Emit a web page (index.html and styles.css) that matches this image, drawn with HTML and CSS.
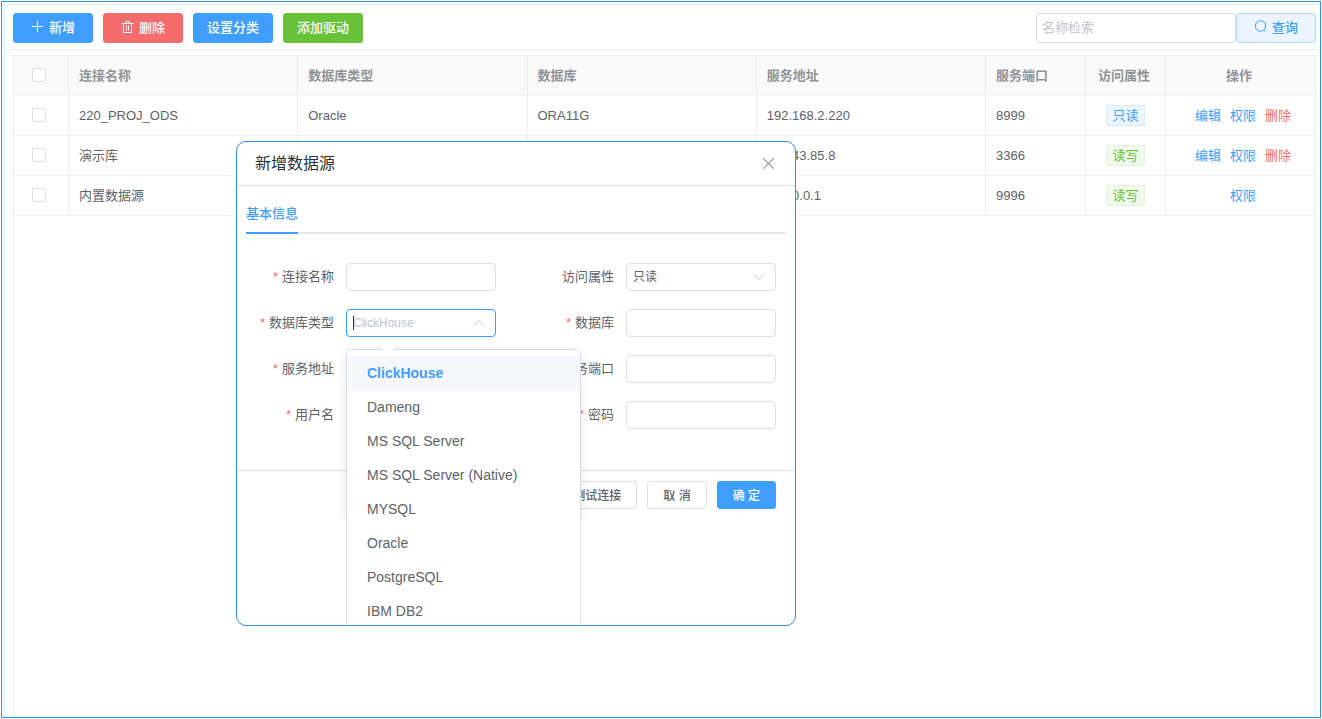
FILE: index.html
```html
<!DOCTYPE html>
<html lang="zh-CN">
<head>
    <meta charset="UTF-8">
    <meta name="viewport" content="width=device-width, initial-scale=1.0">
    <title>数据源管理</title>
    <link rel="stylesheet" href="styles.css">
</head>
<body>
    <div class="page">
        <main class="panel">
            <div class="toolbar">
                <button type="button" class="btn primary">
                    <svg class="icon" viewBox="0 0 13 13"><path d="M6.5 1v11M1 6.5h11"/></svg>新增
                </button>
                <button type="button" class="btn danger">
                    <svg class="icon" viewBox="0 0 13 13"><path d="M.5 3.5h12M4.5 3.5v-2h4v2M2.5 3.5v9h8v-9M5.5 5.5v5M7.5 5.5v5"/></svg>删除
                </button>
                <button type="button" class="btn primary">设置分类</button>
                <button type="button" class="btn success">添加驱动</button>
                <form class="search">
                    <input type="text" class="search-input" placeholder="名称检索" aria-label="名称检索">
                    <button type="button" class="btn plain">
                        <svg class="icon" viewBox="0 0 13 13"><circle cx="6.5" cy="6" r="5.2"/><path d="M10 9.8l1.8 1.8"/></svg>查询
                    </button>
                </form>
            </div>

            <div class="table-wrap">
                <table class="table">
                    <thead>
                        <tr>
                            <th class="col-check"><input type="checkbox" class="check" aria-label="全选"></th>
                            <th>连接名称</th>
                            <th>数据库类型</th>
                            <th>数据库</th>
                            <th>服务地址</th>
                            <th class="col-port">服务端口</th>
                            <th class="col-access">访问属性</th>
                            <th class="col-action">操作</th>
                        </tr>
                    </thead>
                    <tbody>
                        <tr>
                            <td class="col-check"><input type="checkbox" class="check" aria-label="220_PROJ_ODS"></td>
                            <td>220_PROJ_ODS</td>
                            <td>Oracle</td>
                            <td>ORA11G</td>
                            <td>192.168.2.220</td>
                            <td>8999</td>
                            <td class="col-access"><span class="tag">只读</span></td>
                            <td class="col-action"><div class="actions"><a href="#">编辑</a><a href="#">权限</a><a href="#" class="remove">删除</a></div></td>
                        </tr>
                        <tr>
                            <td class="col-check"><input type="checkbox" class="check" aria-label="演示库"></td>
                            <td>演示库</td>
                            <td></td>
                            <td></td>
                            <td>192.43.85.8</td>
                            <td>3366</td>
                            <td class="col-access"><span class="tag tag-write">读写</span></td>
                            <td class="col-action"><div class="actions"><a href="#">编辑</a><a href="#">权限</a><a href="#" class="remove">删除</a></div></td>
                        </tr>
                        <tr>
                            <td class="col-check"><input type="checkbox" class="check" aria-label="内置数据源"></td>
                            <td>内置数据源</td>
                            <td></td>
                            <td></td>
                            <td>127.0.0.1</td>
                            <td>9996</td>
                            <td class="col-access"><span class="tag tag-write">读写</span></td>
                            <td class="col-action"><div class="actions"><a href="#">权限</a></div></td>
                        </tr>
                    </tbody>
                </table>
            </div>
        </main>

        <div class="dialog" role="dialog" aria-labelledby="dialogTitle">
            <div class="dialog-header">
                <h2 id="dialogTitle">新增数据源</h2>
                <button type="button" class="close" aria-label="关闭">
                    <svg viewBox="0 0 12 12"><path d="M1 1l10 10M11 1L1 11"/></svg>
                </button>
            </div>
            <div class="dialog-body">
                <div class="tabs">
                    <button type="button" class="tab">基本信息</button>
                </div>
                <form class="form">
                    <div class="field">
                        <label class="required" for="name">连接名称</label>
                        <input type="text" id="name" class="control">
                    </div>
                    <div class="field">
                        <label for="access">访问属性</label>
                        <div class="select">
                            <select id="access" class="control">
                                <option>只读</option>
                                <option>读写</option>
                            </select>
                            <svg class="arrow" viewBox="0 0 12 12"><path d="M1 3.5l5 5 5-5"/></svg>
                        </div>
                    </div>
                    <div class="field">
                        <label class="required" for="dbType">数据库类型</label>
                        <div class="select open">
                            <input type="text" id="dbType" class="control" role="combobox" aria-expanded="true" aria-controls="dbTypeList" placeholder="ClickHouse">
                            <span class="caret"></span>
                            <svg class="arrow" viewBox="0 0 12 12"><path d="M1 8.5l5-5 5 5"/></svg>
                            <div class="dropdown">
                                <ul id="dbTypeList" role="listbox">
                                    <li role="option" class="selected" aria-selected="true">ClickHouse</li>
                                    <li role="option">Dameng</li>
                                    <li role="option">MS SQL Server</li>
                                    <li role="option">MS SQL Server (Native)</li>
                                    <li role="option">MYSQL</li>
                                    <li role="option">Oracle</li>
                                    <li role="option">PostgreSQL</li>
                                    <li role="option">IBM DB2</li>
                                </ul>
                            </div>
                        </div>
                    </div>
                    <div class="field">
                        <label class="required" for="database">数据库</label>
                        <input type="text" id="database" class="control">
                    </div>
                    <div class="field">
                        <label class="required" for="host">服务地址</label>
                        <input type="text" id="host" class="control">
                    </div>
                    <div class="field">
                        <label class="required" for="port">服务端口</label>
                        <input type="text" id="port" class="control">
                    </div>
                    <div class="field">
                        <label class="required" for="user">用户名</label>
                        <input type="text" id="user" class="control">
                    </div>
                    <div class="field">
                        <label class="required" for="password">密码</label>
                        <input type="password" id="password" class="control">
                    </div>
                </form>
            </div>
            <div class="dialog-footer">
                <button type="button" class="btn small">测试连接</button>
                <button type="button" class="btn small">取 消</button>
                <button type="button" class="btn small primary">确 定</button>
            </div>
        </div>
    </div>
</body>
</html>
```
FILE: styles.css
```css
* {
    box-sizing: border-box;
}
body {
    margin: 1px;
    background: #fff;
    color: #606266;
    font-family: "Liberation Sans", "Noto Sans CJK SC", sans-serif;
    font-size: 13px;
}
button, input, select {
    font-family: inherit;
    font-size: inherit;
    color: inherit;
}
svg {
    fill: none;
    stroke: currentColor;
}
.page {
    position: relative;
    display: flex;
    height: calc(100vh - 2px);
    min-height: 640px;
    padding: 2px 0 0 2px;
    border: 1px solid #3a8ee6;
}
.panel {
    flex: 1;
    display: flex;
    flex-direction: column;
    border: 1px solid #e6ebf5;
    border-width: 1px 0 0 1px;
    border-top-left-radius: 4px;
}

/* toolbar */
.toolbar {
    display: flex;
    gap: 10px;
    padding: 8px 4px 6px 8px;
    border-bottom: 1px solid #ebeef5;
}
.btn {
    display: flex;
    align-items: center;
    justify-content: center;
    gap: 5px;
    min-width: 80px;
    height: 30px;
    padding: 0 10px 3px;
    border: 1px solid #dcdfe6;
    border-radius: 3px;
    background: #fff;
    font-weight: 500;
    cursor: pointer;
}
.icon {
    width: 13px;
    height: 13px;
}
.primary {
    border-color: #409eff;
    background: #409eff;
    color: #fff;
}
.danger {
    border-color: #f56c6c;
    background: #f56c6c;
    color: #fff;
}
.success {
    border-color: #67c23a;
    background: #67c23a;
    color: #fff;
}
.plain {
    border-color: #b3d8ff;
    background: #ecf5ff;
    color: #409eff;
}
.search {
    display: flex;
    margin-left: auto;
}
.search-input {
    width: 200px;
    height: 30px;
    padding: 0 5px 2px;
    border: 1px solid #dcdfe6;
    border-radius: 4px;
}
::placeholder {
    color: #c0c4cc;
    opacity: 1;
}

/* table */
.table-wrap {
    flex: 1;
    margin: 5px 4px 0 8px;
    border: 1px solid #ebeef5;
    border-bottom: none;
}
.table {
    width: 100%;
    table-layout: fixed;
    border-collapse: separate;
    border-spacing: 0;
}
.table th,
.table td {
    height: 40px;
    padding: 0 10px;
    border-right: 1px solid #ebeef5;
    border-bottom: 1px solid #ebeef5;
    line-height: 20px;
    text-align: left;
}
.table th {
    background: #fafafa;
    color: #909399;
    font-weight: 700;
}
.table th:last-child,
.table td:last-child {
    border-right: none;
}
.table .col-check {
    width: 55px;
    padding: 0 18px 1px;
}
.table .col-port {
    width: 100px;
}
.table .col-access {
    width: 80px;
    text-align: center;
}
.table .col-action {
    width: 149px;
    text-align: center;
}
.table th.col-access,
.table th.col-action {
    padding-right: 13px;
}
.check {
    display: block;
    width: 14px;
    height: 14px;
    margin: 0;
    appearance: none;
    border: 1px solid #dcdfe6;
    border-radius: 2px;
    background: #fff;
}
.tag {
    display: inline-block;
    padding: 0 5px;
    border: 1px solid #d9ecff;
    background: #ecf5ff;
    color: #409eff;
    line-height: 19px;
}
.tag-write {
    border-color: #e1f3d8;
    background: #f0f9eb;
    color: #67c23a;
}
.actions {
    display: flex;
    justify-content: center;
    gap: 9px;
    padding-left: 5px;
}
.actions a {
    color: #409eff;
    text-decoration: none;
}
.actions .remove {
    color: #f56c6c;
}

/* dialog */
.dialog {
    position: absolute;
    left: 234px;
    top: 139px;
    width: 560px;
    height: 485px;
    overflow: hidden;
    border: 1px solid #3a8ee6;
    border-radius: 10px;
    background: #fff;
}
.dialog-header {
    display: flex;
    align-items: center;
    justify-content: space-between;
    height: 44px;
    padding: 0 20px 0 18px;
    border-bottom: 1px solid #dcdfe6;
}
.dialog-header h2 {
    margin: 0;
    padding-bottom: 3px;
    color: #303133;
    font-size: 16px;
    font-weight: 400;
}
.close {
    padding: 0;
    border: none;
    background: none;
    color: #909399;
    cursor: pointer;
}
.close svg {
    display: block;
    width: 13px;
    height: 13px;
}
.dialog-body {
    padding: 8px 9px 41px;
}
.tabs {
    display: flex;
    height: 40px;
    border-bottom: 2px solid #e4e7ed;
}
.tab {
    height: 40px;
    padding: 0 0 2px;
    border: none;
    border-bottom: 2px solid #409eff;
    background: none;
    color: #409eff;
    font-weight: 500;
}
.form {
    display: grid;
    grid-template-columns: 1fr 1fr;
    gap: 18px 30px;
    margin-top: 29px;
    padding-right: 10px;
}
.field {
    display: flex;
}
.field label {
    width: 100px;
    padding-right: 12px;
    line-height: 28px;
    text-align: right;
}
.required::before {
    content: "*";
    margin-right: 4px;
    color: #f56c6c;
}
.control {
    flex: 1;
    width: 100%;
    min-width: 0;
    height: 28px;
    padding: 0 6px;
    appearance: none;
    border: 1px solid #dcdfe6;
    border-radius: 4px;
    background: #fff;
    font-size: 12px;
}
.select {
    position: relative;
    flex: 1;
    display: flex;
}
.select .arrow {
    position: absolute;
    top: 8px;
    right: 11px;
    width: 12px;
    height: 12px;
    color: #c0c4cc;
}
.open .control {
    border-color: #409eff;
}
.caret {
    position: absolute;
    top: 7px;
    left: 7px;
    width: 1px;
    height: 14px;
    background: #303133;
}
.dropdown {
    position: absolute;
    z-index: 10;
    top: 40px;
    left: 0;
    width: 235px;
    border: 1px solid #e4e7ed;
    border-radius: 4px;
    background: #fff;
}
/* shadow only runs along the upper part of the list */
.dropdown::before {
    content: "";
    position: absolute;
    z-index: -1;
    inset: 0 0 auto;
    height: 170px;
    box-shadow: 0 2px 12px rgba(0, 0, 0, 0.1);
    clip-path: inset(-14px -14px 0);
}
.dropdown::after {
    content: "";
    position: absolute;
    top: -6px;
    left: 35px;
    border: 6px solid transparent;
    border-top: none;
    border-bottom-color: #fff;
}
.dropdown ul {
    margin: 0;
    padding: 6px 0;
    list-style: none;
}
.dropdown li {
    padding: 0 20px;
    font-size: 14px;
    line-height: 34px;
}
.dropdown .selected {
    background: #f5f7fa;
    color: #409eff;
    font-weight: 700;
}
.dialog-footer {
    display: flex;
    justify-content: flex-end;
    gap: 10px;
    padding: 10px 19px;
    border-top: 1px solid #dcdfe6;
}
.small {
    min-width: 0;
    height: 28px;
    padding: 0 15px 2px;
    font-size: 12px;
}
```
